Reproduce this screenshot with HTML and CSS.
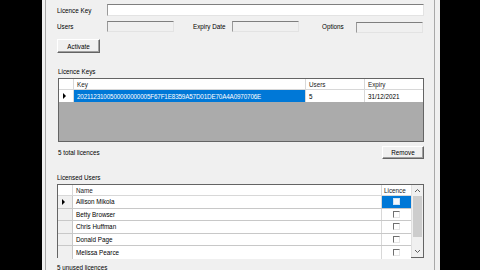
FILE: index.html
```html
<!DOCTYPE html>
<html lang="en">
<head>
	<meta charset="UTF-8">
	<title>Licence Manager</title>
	<link rel="stylesheet" href="styles.css">
</head>
<body>
	<div class="window">
		<div class="panel">
			<div class="form-row first">
				<label class="lbl w-key">Licence Key</label>
				<span class="textbox key-box"></span>
			</div>
			<div class="form-row second">
				<label class="lbl w-key">Users</label>
				<span class="textbox disabled short"></span>
				<label class="lbl w-expiry">Expiry Date</label>
				<span class="textbox disabled short"></span>
				<label class="lbl w-options">Options</label>
				<span class="textbox disabled options-box"></span>
			</div>
			<div class="btn-row">
				<button class="btn activate">Activate</button>
			</div>

			<div class="caption keys-caption">Licence Keys</div>
			<div class="grid keys-grid">
				<div class="g-row g-head">
					<span class="cell sel"></span>
					<span class="cell c-key">Key</span>
					<span class="cell c-users">Users</span>
					<span class="cell c-expiry last">Expiry</span>
				</div>
				<div class="g-row g-data">
					<span class="cell sel"><i class="arrow"></i></span>
					<span class="cell c-key picked key-text">2021123100500000000005F67F1E8359A57D01DE70A4A0970706E</span>
					<span class="cell c-users">5</span>
					<span class="cell c-expiry last">31/12/2021</span>
				</div>
				<div class="g-empty"></div>
			</div>
			<div class="foot-row">
				<span>5 total licences</span>
				<button class="btn remove">Remove</button>
			</div>

			<div class="caption users-caption">Licensed Users</div>
			<div class="grid users-grid">
				<div class="users-body">
					<div class="g-row g-head">
						<span class="cell sel"></span>
						<span class="cell c-name">Name</span>
						<span class="cell c-lic last">Licence</span>
					</div>
					<div class="g-row u-row">
						<span class="cell sel"><i class="arrow"></i></span>
						<span class="cell c-name">Allison Mikola</span>
						<span class="cell c-lic last picked"><i class="check on"></i></span>
					</div>
					<div class="g-row u-row">
						<span class="cell sel"></span>
						<span class="cell c-name">Betty Browser</span>
						<span class="cell c-lic last"><i class="check"></i></span>
					</div>
					<div class="g-row u-row">
						<span class="cell sel"></span>
						<span class="cell c-name">Chris Huffman</span>
						<span class="cell c-lic last"><i class="check"></i></span>
					</div>
					<div class="g-row u-row">
						<span class="cell sel"></span>
						<span class="cell c-name">Donald Page</span>
						<span class="cell c-lic last"><i class="check"></i></span>
					</div>
					<div class="g-row u-row">
						<span class="cell sel"></span>
						<span class="cell c-name">Melissa Pearce</span>
						<span class="cell c-lic last"><i class="check"></i></span>
					</div>
				</div>
				<div class="scrollbar">
					<span class="sb-btn">
						<svg width="7" height="5" viewBox="0 0 7 5"><path d="M1 4 L3.5 1.5 L6 4" fill="none" stroke="#606060" stroke-width="1"/></svg>
					</span>
					<span class="sb-track"><span class="sb-thumb"></span></span>
					<span class="sb-btn">
						<svg width="7" height="5" viewBox="0 0 7 5"><path d="M1 1 L3.5 3.5 L6 1" fill="none" stroke="#606060" stroke-width="1"/></svg>
					</span>
				</div>
			</div>
			<div class="caption tail">5 unused licences</div>
		</div>
	</div>
</body>
</html>
```

FILE: styles.css
```css
/*--reset--*/
html, body {
	margin: 0;
	padding: 0;
}
body {
	width: 480px;
	height: 270px;
	overflow: hidden;
	background: #000;
	font-family: "Liberation Sans", Arial, sans-serif;
	font-size: 6.3px;
	color: #000;
}
button {
	font: inherit;
	color: inherit;
	padding: 0;
}

/**
 * window frame
 */
.window {
	margin-left: 42px;
	width: 398px;
	height: 270px;
	background: #f0f0f0;
	padding: 0 5px 0 3px;
	box-sizing: border-box;
	overflow: hidden;
}
.panel {
	height: 270px;
	border-left: 1px solid #a8a8a8;
	border-right: 1px solid #a8a8a8;
	padding: 0 10px 0 11px;
	box-sizing: border-box;
	display: flex;
	flex-direction: column;
}
.panel > * {
	flex-shrink: 0;
}

/**
 * form
 */
.form-row {
	display: flex;
	align-items: center;
}
.form-row.first {
	margin-top: 4px;
	height: 12px;
}
.form-row.second {
	margin-top: 4px;
	height: 12px;
}
.lbl {
	white-space: nowrap;
}
.w-key {
	width: 50px;
}
.w-expiry {
	width: 39px;
	margin-left: 19px;
}
.w-options {
	width: 34px;
	margin-left: 23px;
}
.textbox {
	display: block;
	height: 12px;
	box-sizing: border-box;
	background: #fff;
	border: 1px solid #e3e3e3;
	border-top-color: #7f7f7f;
	border-left-color: #9a9a9a;
}
.textbox.disabled {
	background: #f0f0f0;
	height: 11px;
}
.key-box {
	flex: 1;
}
.short {
	width: 67px;
}
.options-box {
	width: 67px;
	margin-top: 3px;
}

.btn {
	display: flex;
	align-items: center;
	justify-content: center;
	background: #f0f0f0;
	border: 1px solid;
	border-color: #ffffff #646464 #646464 #ffffff;
	box-shadow: inset -1px -1px 0 #a0a0a0;
	box-sizing: border-box;
	cursor: pointer;
}
.btn-row {
	margin-top: 7px;
	display: flex;
}
.activate {
	width: 43px;
	height: 14px;
}

.caption {
	height: 8px;
	line-height: 8px;
	white-space: nowrap;
}
.keys-caption {
	margin-top: 15px;
	padding-left: 1px;
}

/**
 * data grids
 */
.grid {
	margin-top: 2px;
	border: 1px solid #646464;
	background: #ababab;
	box-sizing: border-box;
}
.g-row {
	display: flex;
	background: #fff;
}
.cell {
	display: flex;
	align-items: center;
	box-sizing: border-box;
	padding-left: 3px;
	border-right: 1px solid #d8d8d8;
	white-space: nowrap;
	overflow: hidden;
}
.cell.last {
	border-right: 0;
}
.sel {
	width: 15px;
	flex: none;
	padding-left: 4px;
}
.g-head {
	height: 11px;
	border-bottom: 1px solid #d8d8d8;
	box-sizing: border-box;
}
.g-head .cell {
	color: #222;
}
.arrow {
	display: block;
	width: 0;
	height: 0;
	border-left: 3px solid #000;
	border-top: 3px solid transparent;
	border-bottom: 3px solid transparent;
}
.picked {
	background: #0078d7;
	color: #fff;
}

.keys-grid {
	height: 64px;
	margin-left: 1px;
}
.keys-grid .g-data {
	height: 12px;
}
.c-key {
	width: 232px;
	flex: none;
}
.key-text {
	letter-spacing: -0.15px;
}
.c-users {
	width: 59px;
	flex: none;
}
.c-expiry {
	flex: 1;
}

.foot-row {
	margin-top: 4px;
	height: 13px;
	display: flex;
	align-items: center;
	justify-content: space-between;
	padding-left: 1px;
}
.remove {
	width: 42px;
	height: 13px;
}

.users-caption {
	margin-top: 15px;
}
.users-grid {
	height: 74px;
	display: flex;
	background: #fff;
}
.users-body {
	flex: 1;
}
.u-row {
	height: 12.6px;
	border-bottom: 1px solid #c8c8c8;
	box-sizing: border-box;
}
.u-row:last-child {
	border-bottom: 0;
}
.u-row .sel {
	background: #f0f0f0;
	border-right-color: #c8c8c8;
}
.c-name {
	flex: 1;
}
.c-lic {
	width: 29px;
	flex: none;
	justify-content: center;
	padding-left: 0;
}
.g-head .c-lic {
	justify-content: flex-start;
	padding-left: 2px;
}
.check {
	display: block;
	width: 7px;
	height: 7px;
	box-sizing: border-box;
	border: 1px solid #e6e6e6;
	border-top-color: #707070;
	border-left-color: #707070;
	background: #fff;
}
.check.on {
	border-color: #cfe3f5;
	background: #f4f8fc;
}

.scrollbar {
	width: 11px;
	display: flex;
	flex-direction: column;
	background: #f0f0f0;
	border-left: 1px solid #e0e0e0;
}
.sb-btn {
	height: 11px;
	display: flex;
	align-items: center;
	justify-content: center;
}
.sb-track {
	flex: 1;
	display: flex;
	flex-direction: column;
}
.sb-thumb {
	height: 41px;
	margin: 0 1px;
	background: #cdcdcd;
}

.tail {
	margin-top: 6px;
}
```
